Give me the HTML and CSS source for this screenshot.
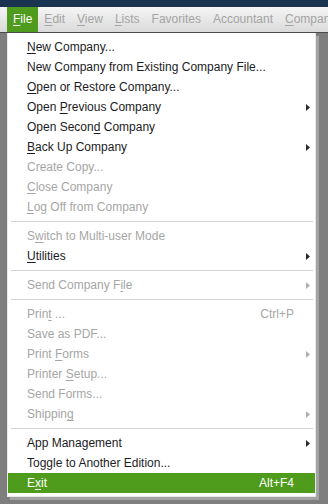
FILE: index.html
```html
<!DOCTYPE html>
<html>
<head>
<meta charset="utf-8">
<link rel="stylesheet" href="styles.css">
</head>
<body>
<div class="screen">
  <div class="titlebar"></div>
  <div class="menubar">
    <span class="mb-item active"><u>F</u>ile</span>
    <span class="mb-item"><u>E</u>dit</span>
    <span class="mb-item"><u>V</u>iew</span>
    <span class="mb-item"><u>L</u>ists</span>
    <span class="mb-item">Favorites</span>
    <span class="mb-item">Accountant</span>
    <span class="mb-item"><u>C</u>ompany</span>
  </div>
  <div class="dropdown">
    <div class="row"><span class="label"><u>N</u>ew Company...</span><span class="key"></span><span class="sub"></span></div>
    <div class="row"><span class="label">New Company from Existing Company File...</span><span class="key"></span><span class="sub"></span></div>
    <div class="row"><span class="label"><u>O</u>pen or Restore Company...</span><span class="key"></span><span class="sub"></span></div>
    <div class="row"><span class="label">Open <u>P</u>revious Company</span><span class="key"></span><span class="sub"><svg width="4" height="7" viewBox="0 0 4 7"><polygon points="0,0 4,3.5 0,7"/></svg></span></div>
    <div class="row"><span class="label">Open Secon<u>d</u> Company</span><span class="key"></span><span class="sub"></span></div>
    <div class="row"><span class="label"><u>B</u>ack Up Company</span><span class="key"></span><span class="sub"><svg width="4" height="7" viewBox="0 0 4 7"><polygon points="0,0 4,3.5 0,7"/></svg></span></div>
    <div class="row off"><span class="label">Create Copy...</span><span class="key"></span><span class="sub"></span></div>
    <div class="row off"><span class="label"><u>C</u>lose Company</span><span class="key"></span><span class="sub"></span></div>
    <div class="row off"><span class="label"><u>L</u>og Off from Company</span><span class="key"></span><span class="sub"></span></div>
    <div class="sep"></div>
    <div class="row off"><span class="label">S<u>w</u>itch to Multi-user Mode</span><span class="key"></span><span class="sub"></span></div>
    <div class="row"><span class="label"><u>U</u>tilities</span><span class="key"></span><span class="sub"><svg width="4" height="7" viewBox="0 0 4 7"><polygon points="0,0 4,3.5 0,7"/></svg></span></div>
    <div class="sep"></div>
    <div class="row off"><span class="label">Send Company F<u>i</u>le</span><span class="key"></span><span class="sub"><svg width="4" height="7" viewBox="0 0 4 7"><polygon points="0,0 4,3.5 0,7"/></svg></span></div>
    <div class="sep"></div>
    <div class="row off"><span class="label">Prin<u>t</u> ...</span><span class="key">Ctrl+P</span><span class="sub"></span></div>
    <div class="row off"><span class="label">Save as PDF...</span><span class="key"></span><span class="sub"></span></div>
    <div class="row off"><span class="label">Print <u>F</u>orms</span><span class="key"></span><span class="sub"><svg width="4" height="7" viewBox="0 0 4 7"><polygon points="0,0 4,3.5 0,7"/></svg></span></div>
    <div class="row off"><span class="label">Printer <u>S</u>etup...</span><span class="key"></span><span class="sub"></span></div>
    <div class="row off"><span class="label">Send Forms...</span><span class="key"></span><span class="sub"></span></div>
    <div class="row off"><span class="label">Shippin<u>g</u></span><span class="key"></span><span class="sub"><svg width="4" height="7" viewBox="0 0 4 7"><polygon points="0,0 4,3.5 0,7"/></svg></span></div>
    <div class="sep"></div>
    <div class="row"><span class="label">App Management</span><span class="key"></span><span class="sub"><svg width="4" height="7" viewBox="0 0 4 7"><polygon points="0,0 4,3.5 0,7"/></svg></span></div>
    <div class="row"><span class="label">Toggle to Another Edition...</span><span class="key"></span><span class="sub"></span></div>
    <div class="row hot"><span class="label">E<u>x</u>it</span><span class="key">Alt+F4</span><span class="sub"></span></div>
  </div>
</div>
</body>
</html>
```
FILE: styles.css
```css
html, body {
  margin: 0;
  padding: 0;
}
body {
  background: #7f7f7f;
  font-family: "Liberation Sans", Arial, sans-serif;
  font-size: 12px;
}
.screen {
  width: 328px;
  height: 504px;
  overflow: hidden;
  background: #7e7e7e;
}
.titlebar {
  height: 7px;
  background: #1a3350;
}
.menubar {
  height: 25px;
  border-bottom: 1px solid #4a4a4a;
  background: linear-gradient(#f5f5f5, #dadada);
  display: flex;
  padding-left: 7px;
  white-space: nowrap;
  overflow: hidden;
}
.mb-item {
  line-height: 25px;
  padding: 0 6px;
  color: #a4a4a4;
  font-size: 12px;
}
.mb-item.active {
  background: #4e9b1e;
  color: #ffffff;
}
u {
  text-decoration: underline;
  text-underline-offset: 2px;
}
.dropdown {
  margin-left: 7px;
  width: 307px;
  background: #ffffff;
  border: 1px solid #e8e8e8;
  border-top: none;
  padding: 4px 0 3px;
  box-shadow: 3px 3px 0 #a3a3a3;
}
.row {
  display: flex;
  align-items: center;
  height: 20px;
  line-height: 20px;
  padding-left: 19px;
  color: #1c1c24;
  white-space: nowrap;
}
.row .label {
  flex: 1;
}
.row .key {
  text-align: right;
}
.row .sub {
  width: 21px;
  display: flex;
  align-items: center;
  padding-left: 12px;
  box-sizing: border-box;
}
.row .sub svg {
  fill: #2a2a2a;
  display: block;
}
.row.off {
  color: #a6a6a6;
}
.row.off .sub svg {
  fill: #b0b0b0;
}
.row.hot {
  background: #4f9c1d;
  color: #ffffff;
}
.sep {
  height: 9px;
  display: flex;
  align-items: flex-start;
  padding: 0 2px 0 3px;
}
.sep::before {
  content: "";
  display: block;
  width: 100%;
  height: 1px;
  margin-top: 4px;
  background: #d6d6d6;
}
```
